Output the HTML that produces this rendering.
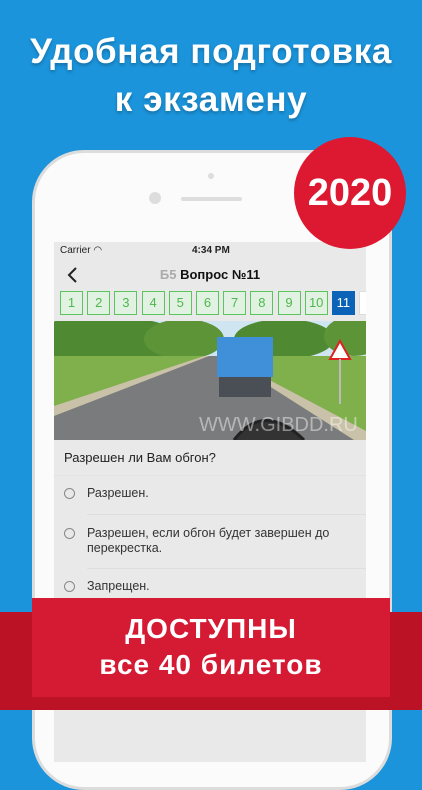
<!DOCTYPE html>
<html><head><meta charset="utf-8"><style>
*{margin:0;padding:0;box-sizing:border-box}
body{width:422px;height:750px;overflow:hidden;background:#1b94db;position:relative;font-family:"Liberation Sans","DejaVu Sans",sans-serif}
.t{position:absolute;left:0;width:422px;text-align:center;color:#fff;font-weight:bold;font-size:35px;font-family:"Liberation Sans",sans-serif;text-shadow:0 2px 3px rgba(0,0,0,.25);letter-spacing:1px}
.phone{position:absolute;left:32px;top:150px;width:360px;height:640px;background:#fbfbfb;border-radius:52px;border:3px solid #dcdcdc}
.screen{position:absolute;left:54px;top:242px;width:312px;height:520px;background:#e9e9e9;overflow:hidden}
.st{position:absolute;top:0;left:0;width:312px;height:16px;font-size:10px;color:#222}
.nav{position:absolute;top:18px;left:0;width:312px;height:30px}
.nums{position:absolute;top:49px;left:6px;height:24px;white-space:nowrap}
.nums span{display:inline-block;width:23px;height:24px;margin-right:4.2px;border:1px solid #5cc45c;background:#e2f2e2;color:#4cb84c;text-align:center;line-height:22px;font-size:13px;vertical-align:top}
.nums span.a{background:#0b63b8;border-color:#0b63b8;color:#fff}
.nums span.n{background:#fff;border-color:#ddd}
.q{position:absolute;left:10px;font-size:13px;color:#222}
.o{position:absolute;left:29px;font-size:12.5px;color:#333;line-height:15px}
.r{position:absolute;left:10px;width:11px;height:11px;border:1px solid #888;border-radius:50%}
.ln{position:absolute;left:33px;right:0;height:1px;background:#dedede}
</style></head><body>
<div class="t" style="top:32px;letter-spacing:0.6px">Удобная подготовка</div>
<div class="t" style="top:80px;letter-spacing:0.6px">к экзамену</div>
<div class="phone"></div>
<div style="position:absolute;left:149px;top:192px;width:12px;height:12px;border-radius:50%;background:#ddd"></div>
<div style="position:absolute;left:181px;top:197px;width:61px;height:4px;border-radius:2px;background:#ddd"></div>
<div style="position:absolute;left:208px;top:173px;width:6px;height:6px;border-radius:50%;background:#ddd"></div>
<div class="screen">
 <div class="st"><span style="position:absolute;left:6px;top:3px">Carrier ◠</span><span style="position:absolute;left:138px;top:3px;font-weight:bold">4:34 PM</span></div>
 <div class="nav"><svg style="position:absolute;left:12px;top:6px" width="12" height="18"><path d="M10 2 L3 9 L10 16" stroke="#222" stroke-width="2" fill="none"/></svg>
 <div style="position:absolute;left:0;width:312px;top:7px;text-align:center;font-size:13px;font-weight:bold;color:#111"><span style="color:#aaa">Б5</span> Вопрос №11</div></div>
 <div class="nums"><span>1</span><span>2</span><span>3</span><span>4</span><span>5</span><span>6</span><span>7</span><span>8</span><span>9</span><span>10</span><span class="a">11</span><span class="n"></span></div>
 <svg style="position:absolute;left:0;top:79px" width="312" height="119" viewBox="0 0 312 119">
  <rect width="312" height="119" fill="#6fa046"/>
  <rect width="312" height="35" fill="#cfe6f2"/>
  <ellipse cx="50" cy="20" rx="80" ry="25" fill="#4f8a32"/>
  <ellipse cx="130" cy="18" rx="40" ry="20" fill="#5d9438"/>
  <ellipse cx="230" cy="18" rx="50" ry="20" fill="#4f8a32"/>
  <ellipse cx="300" cy="15" rx="30" ry="20" fill="#5d9438"/>
  <rect y="35" width="312" height="84" fill="#7fb04c"/>
  <polygon points="150,35 170,35 312,110 312,119 0,119 0,85" fill="#c9c1a8"/>
  <polygon points="155,35 168,35 300,119 0,119 0,95" fill="#7a7b7c"/>
  <rect x="163" y="16" width="56" height="40" fill="#3f8fd9"/>
  <rect x="165" y="56" width="52" height="20" fill="#4a4f55"/>
  <polygon points="286,20 276,38 296,38" fill="#fff" stroke="#d22" stroke-width="2"/>
  <rect x="285" y="38" width="2" height="45" fill="#bbb"/>
  <path d="M180 119 Q 210 80 250 119" stroke="#222" stroke-width="3" fill="#333"/>
  <text x="145" y="110" font-size="20" fill="rgba(255,255,255,.45)" font-family="Liberation Sans">WWW.GIBDD.RU</text>
 </svg>
 <div class="q" style="top:208px">Разрешен ли Вам обгон?</div>
 <div style="position:absolute;left:0;right:0;top:233px;height:1px;background:#e2e2e2"></div>
 <div class="r" style="top:246px"></div><div class="o" style="top:244px;left:33px">Разрешен.</div>
 <div class="ln" style="top:272px"></div>
 <div class="r" style="top:286px"></div><div class="o" style="top:284px;left:33px">Разрешен, если обгон будет завершен до<br>перекрестка.</div>
 <div class="ln" style="top:326px"></div>
 <div class="r" style="top:339px"></div><div class="o" style="top:337px;left:33px">Запрещен.</div>
</div>
<div style="position:absolute;left:0;top:612px;width:422px;height:98px;background:#bb1226"></div>
<div style="position:absolute;left:32px;top:598px;width:358px;height:99px;background:#d51a33"></div>
<div class="t" style="top:613px;font-size:28px;text-shadow:none">ДОСТУПНЫ</div>
<div class="t" style="top:649px;font-size:28px;text-shadow:none">все 40 билетов</div>
<div style="position:absolute;left:294px;top:137px;width:112px;height:112px;border-radius:50%;background:#dd1932"></div>
<div class="t" style="left:294px;width:112px;top:172px;font-size:38px;text-shadow:none;letter-spacing:0">2020</div>
</body></html>
